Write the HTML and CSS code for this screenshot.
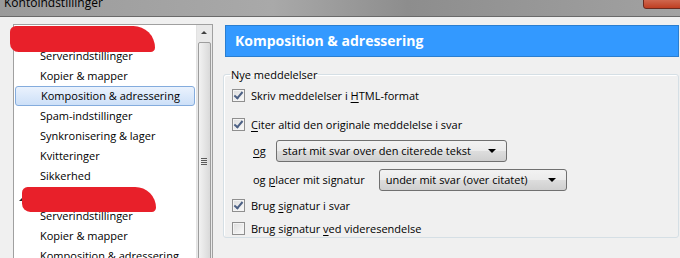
FILE: index.html
```html
<!DOCTYPE html>
<html lang="da">
<head>
  <meta charset="UTF-8">
  <title>Kontoindstillinger</title>
  <link rel="stylesheet" href="styles.css">
</head>
<body>

<div class="titlebar">
  <span class="title">Kontoindstillinger</span>
  <span class="close"></span>
</div>

<div class="window">
  <div class="tree">
    <div class="tree-list">
      <div class="scribble"></div>
      <div class="item">Serverindstillinger</div>
      <div class="item">Kopier &amp; mapper</div>
      <div class="item selected">Komposition &amp; adressering</div>
      <div class="item">Spam-indstillinger</div>
      <div class="item">Synkronisering &amp; lager</div>
      <div class="item">Kvitteringer</div>
      <div class="item">Sikkerhed</div>
      <div class="account"><span class="twisty"></span><div class="scribble low"></div></div>
      <div class="item">Serverindstillinger</div>
      <div class="item">Kopier &amp; mapper</div>
      <div class="item">Komposition &amp; adressering</div>
    </div>
    <div class="scrollbar">
      <div class="arrow-up"></div>
      <div class="thumb"><span class="grip"></span></div>
    </div>
  </div>

  <div class="pane">
    <div class="header">Komposition &amp; adressering</div>

    <fieldset class="group">
      <legend>Nye meddelelser</legend>

      <label class="check">
        <span class="box checked"></span>
        <span>Skriv meddelelser i <u>H</u>TML-format</span>
      </label>

      <label class="check gap">
        <span class="box checked"></span>
        <span><u>C</u>iter altid den originale meddelelse i svar</span>
      </label>

      <div class="row">
        <span class="lbl"><u>o</u>g</span>
        <div class="select wide"><span>start mit svar over den citerede tekst</span><span class="drop"></span></div>
      </div>
      <div class="row">
        <span class="lbl long">og <u>p</u>lacer mit signatur</span>
        <div class="select narrow"><span>under mit svar (over citatet)</span><span class="drop"></span></div>
      </div>

      <label class="check">
        <span class="box checked"></span>
        <span>Brug <u>s</u>ignatur i svar</span>
      </label>
      <label class="check">
        <span class="box"></span>
        <span>Brug signatur <u>v</u>ed videresendelse</span>
      </label>
    </fieldset>
  </div>
</div>

</body>
</html>
```

FILE: styles.css
```css
body {
  margin: 0;
  width: 680px;
  height: 258px;
  overflow: hidden;
  background: #f0f0f0;
  font-family: "Open Sans", "Noto Sans", Arial, sans-serif;
  font-size: 11px;
  color: #000;
}
.titlebar {
  height: 16px;
  background: linear-gradient(to right, #9a9a9a 0%, #a9a9a9 40%, #8d8d8d 60%, #a2a2a2 100%);
  border-bottom: 1px solid #6a6a6a;
  display: flex;
  position: relative;
  overflow: hidden;
}
.title {
  margin: -5px 0 0 4px;
  font-size: 12px;
  line-height: 16px;
  color: #000;
}
.close {
  position: absolute;
  right: -4px;
  top: -6px;
  width: 39px;
  height: 13px;
  border: 1px solid #6b2a1e;
  border-radius: 3px;
  background: linear-gradient(#d9806a, #bf3f22);
}
.window {
  display: flex;
  padding: 7px 0 0 13px;
}
.tree {
  width: 198px;
  height: 240px;
  background: #fff;
  border: 1px solid #a0a0a0;
  display: flex;
  flex: none;
}
.tree-list {
  flex: 1;
  padding-top: 21px;
  position: relative;
}
.scribble {
  position: absolute;
  left: -4px;
  top: 1px;
  width: 145px;
  height: 26px;
  background: #e8202a;
  border-radius: 8px 30px 6px 12px;
  filter: blur(0.6px);
}
.scribble.low {
  left: 8px;
  top: 1px;
  width: 134px;
  height: 25px;
}
.item {
  height: 20px;
  line-height: 20px;
  padding-left: 26px;
  white-space: nowrap;
}
.item.selected {
  margin: 0 1px;
  padding-left: 25px;
  height: 18px;
  line-height: 18px;
  border: 1px solid #84acdd;
  border-radius: 3px;
  background: linear-gradient(#eaf2fd, #cde0f8);
}
.account {
  height: 20px;
  position: relative;
}
.twisty {
  position: absolute;
  left: 5px;
  top: 9px;
  width: 0;
  height: 0;
  border-left: 6px solid transparent;
  border-bottom: 6px solid #262626;
}
.scrollbar {
  width: 15px;
  background: #e9e9e9;
  border-left: 1px solid #e2e2e2;
  display: flex;
  flex-direction: column;
}
.arrow-up {
  height: 17px;
  position: relative;
}
.arrow-up::after {
  content: "";
  position: absolute;
  left: 4px;
  top: 6px;
  border-left: 3px solid transparent;
  border-right: 3px solid transparent;
  border-bottom: 3px solid #404040;
}
.thumb {
  flex: 1;
  margin: 0 1px;
  border: 1px solid #9d9d9d;
  border-radius: 2px;
  background: linear-gradient(to right, #f2f2f2, #d9d9d9);
  position: relative;
}
.grip {
  position: absolute;
  left: 2px;
  top: 115px;
  width: 6px;
  height: 7px;
  background: repeating-linear-gradient(#5a5a5a 0 1px, transparent 1px 2px);
}
.pane {
  margin-left: 12px;
  width: 454px;
}
.header {
  margin-top: 1px;
  height: 30px;
  line-height: 30px;
  background: #3399ff;
  border: 1px solid #2a7ed0;
  color: #fff;
  font-weight: bold;
  font-size: 14px;
  padding-left: 9px;
}
.group {
  margin: 10px 0 0 -2px;
  padding: 2px 0 9px 8px;
  height: 158px;
  border: 1px solid #d5dfe5;
  border-radius: 3px;
  box-shadow: inset 1px 1px 0 #fff;
}
.group legend {
  padding: 0 1px;
  margin-left: -2px;
}
.check {
  display: flex;
  align-items: center;
  gap: 6px;
  height: 23px;
}
.check.gap {
  margin-top: 6px;
}
.box {
  width: 11px;
  height: 11px;
  border: 1px solid #8f8f8f;
  background: linear-gradient(135deg, #dcdcdc, #fbfbfb);
  box-shadow: inset 0 0 0 1px #f4f4f4;
  position: relative;
}
.box.checked::after {
  content: "";
  position: absolute;
  left: 3px;
  top: 0px;
  width: 3px;
  height: 7px;
  border-right: 2px solid #4d6185;
  border-bottom: 2px solid #4d6185;
  transform: rotate(40deg);
}
u {
  text-decoration-thickness: 1px;
  text-underline-offset: 2px;
}
.row {
  display: flex;
  align-items: center;
  gap: 10px;
  height: 29px;
  padding-left: 21px;
}
.lbl.long {
  margin-right: 4px;
}
.select {
  height: 22px;
  line-height: 22px;
  border: 1px solid #707070;
  border-radius: 3px;
  background: linear-gradient(#f2f2f2 0%, #ebebeb 50%, #dddddd 51%, #cfcfcf 100%);
  padding-left: 6px;
  display: flex;
  justify-content: space-between;
  align-items: center;
  box-sizing: border-box;
}
.select.wide {
  width: 231px;
}
.select.narrow {
  width: 188px;
}
.drop {
  margin-right: 10px;
  width: 0;
  height: 0;
  border-left: 4px solid transparent;
  border-right: 4px solid transparent;
  border-top: 4px solid #000;
}
```
